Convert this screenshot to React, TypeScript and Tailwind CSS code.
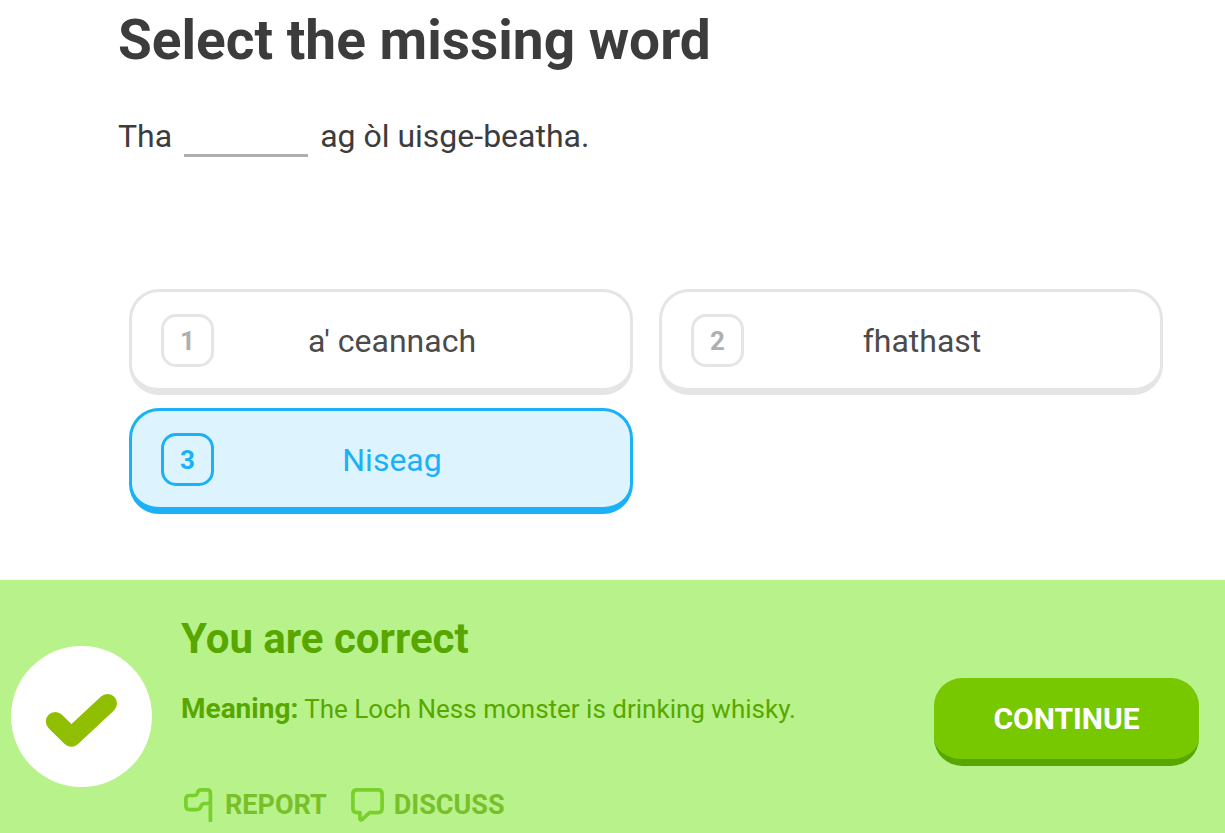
import { useState } from "react";
import clsx from "clsx";

interface Choice {
  id: number;
  label: string;
}

interface ChoiceButtonProps {
  choice: Choice;
  selected: boolean;
  onSelect: (id: number) => void;
}

const CHOICES: Choice[] = [
  { id: 1, label: "a' ceannach" },
  { id: 2, label: "fhathast" },
  { id: 3, label: "Niseag" },
];

function ChoiceButton({ choice, selected, onSelect }: ChoiceButtonProps) {
  return (
    <button
      type="button"
      aria-pressed={selected}
      onClick={() => onSelect(choice.id)}
      className={clsx(
        "flex h-[106px] items-center rounded-[30px] border-[3px] border-b-[7px] pl-[29px] pr-[60px] text-[32px]",
        selected
          ? "border-[#1cb0f6] bg-[#ddf4ff] text-[#1cb0f6]"
          : "border-[#e5e5e5] bg-white text-[#4b4b4b]"
      )}
    >
      <span
        className={clsx(
          "flex size-[53px] shrink-0 items-center justify-center rounded-[15px] border-[3px] pt-0.5 text-[26px] font-bold",
          selected ? "border-[#1cb0f6]" : "border-[#e5e5e5] text-[#afafaf]"
        )}
      >
        {choice.id}
      </span>
      <span className="flex-1 pt-0.5 text-center">{choice.label}</span>
    </button>
  );
}

function CheckBadge() {
  return (
    <svg viewBox="0 0 141 141" className="mt-[33px] size-[141px] shrink-0" aria-hidden="true">
      <circle cx="70.5" cy="70.5" r="70.5" fill="#fff" />
      <path
        d="M44.3 75.5 60.3 91.3 96.5 57.5"
        fill="none"
        stroke="#8fbf00"
        strokeWidth="19"
        strokeLinecap="round"
        strokeLinejoin="round"
      />
    </svg>
  );
}

function FlagIcon() {
  return (
    <svg viewBox="0 0 29 34" className="h-[34px] w-[29px]" fill="none" stroke="#7ad02b" strokeWidth="3.7" aria-hidden="true">
      <path d="M26.4 34V5.5Q26.4 1.9 23 1.9H17Q14.3 1.9 13.6 4.6 12.9 7.5 10 7.5H5.5Q1.9 7.5 1.9 11V18Q1.9 21.6 5.5 21.6H13Q16 21.6 16.8 18.6 17.6 15.5 21 15.5H26.4" />
    </svg>
  );
}

function BubbleIcon() {
  return (
    <svg viewBox="0 0 33 34" className="h-[34px] w-[33px]" fill="none" stroke="#7ad02b" strokeWidth="3.7" strokeLinejoin="round" aria-hidden="true">
      <path d="M6 1.9H27Q31.1 1.9 31.1 6V20.6Q31.1 24.7 27 24.7H18.6L11 31.6Q8.9 32.8 8.9 30V24.7H6Q1.9 24.7 1.9 20.6V6Q1.9 1.9 6 1.9Z" />
    </svg>
  );
}

export default function App() {
  const [selected, setSelected] = useState(3);

  return (
    <div className="flex min-h-screen flex-col bg-white font-[Roboto,sans-serif] text-[#3c3c3c]">
      <main className="flex-1 pl-[118px] pr-[62px] pt-2 pb-16">
        <h1 className="text-[55px] leading-[64px] font-bold">Select the missing word</h1>
        <p className="mt-10 flex text-[32px] leading-[48px]">
          <span>Tha</span>
          <span className="mx-3 mb-[3px] w-[124px] border-b-[3px] border-[#afafaf]" />
          <span>ag òl uisge-beatha.</span>
        </p>
        <div className="mt-[129px] ml-[11px] grid grid-cols-2 gap-x-[26px] gap-y-[13px]">
          {CHOICES.map((choice) => (
            <ChoiceButton
              key={choice.id}
              choice={choice}
              selected={choice.id === selected}
              onSelect={setSelected}
            />
          ))}
        </div>
      </main>

      <footer className="flex items-start gap-[29px] bg-[#b8f28b] pt-[33px] pr-[26px] pb-2 pl-[11px] text-[#58a700]">
        <CheckBadge />
        <div className="flex-1">
          <h2 className="text-[42px] leading-[52px] font-bold">You are correct</h2>
          <p className="mt-6 text-[26px] leading-[40px]">
            <strong className="text-[28px] font-bold">Meaning:</strong> The Loch Ness monster is drinking whisky.
          </p>
          <div className="mt-14 flex gap-6 pl-[3px] text-[27px] leading-[40px] font-bold text-[#78c02a]">
            <button type="button" className="flex items-center gap-3">
              <FlagIcon />
              REPORT
            </button>
            <button type="button" className="flex items-center gap-2.5">
              <BubbleIcon />
              DISCUSS
            </button>
          </div>
        </div>
        <button
          type="button"
          className="mt-[65px] h-[88px] w-[265px] shrink-0 rounded-[28px] border-b-[7px] border-[#58a700] bg-[#78c800] text-[30px] font-bold text-white"
        >
          CONTINUE
        </button>
      </footer>
    </div>
  );
}
